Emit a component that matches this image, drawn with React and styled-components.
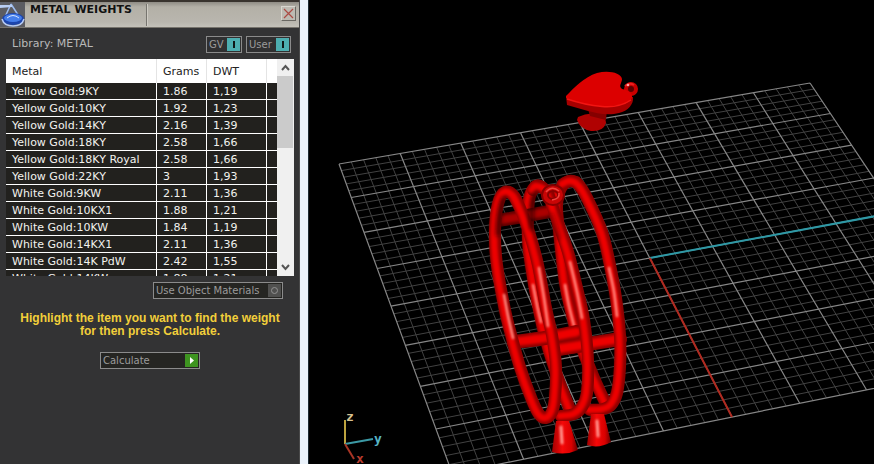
import React from "react";
import styled, { createGlobalStyle } from "styled-components";

const GlobalStyle = createGlobalStyle`
  * { box-sizing: border-box; }
  html, body { margin: 0; background: #000; }
  body { font-family: "DejaVu Sans", Verdana, sans-serif; font-size: 11px; }
  button { font: inherit; margin: 0; padding: 0; }
`;

const Workspace = styled.main`
  display: grid;
  grid-template-columns: 309px minmax(0, 1fr);
  height: 100vh;
  overflow: hidden;
`;

const Panel = styled.section`
  display: flex;
  flex-direction: column;
  background: #333334;
  border-right: 8px solid #eaf2fb;
  box-shadow: inset -1px 0 0 #4a4a4a, 1px 0 0 #1c2a33;
  margin-right: 1px;
`;

const TitleBar = styled.header`
  display: flex;
  height: 28px;
  margin-right: 1px;
  border-top: 2px solid #38332e;
  border-bottom: 1px solid #77746d;
  background: linear-gradient(#8f8c85, #b3b0a7 5px, #b9b6ae 20px, #c4c2ba);
`;

const TitleIcon = styled.svg`
  width: 25px;
  height: 25px;
  background: #5b5c62;
`;

const Title = styled.h1`
  flex: 0 0 122px;
  margin: 2px 0 1px;
  padding-left: 5px;
  border-right: 1px solid #77756f;
  box-shadow: 1px 0 0 #cfccc4;
  font-size: 11px;
  line-height: 12px;
  color: #111;
  white-space: nowrap;
`;

const CloseButton = styled.button`
  display: grid;
  place-items: center;
  width: 15px;
  height: 15px;
  margin: 4px 3px 0 auto;
  background: #bdbab2;
  border: 1px solid;
  border-color: #d8d6cf #6a6862 #6a6862 #d8d6cf;
`;

const LibraryRow = styled.div`
  display: flex;
  align-items: flex-start;
  gap: 4px;
  height: 31px;
  padding: 8px 9px 0 12px;
`;

const LibraryName = styled.span`
  flex: 1;
  line-height: 16px;
  color: #b9b9b9;
`;

const PanelButton = styled.button`
  display: flex;
  align-items: center;
  justify-content: space-between;
  width: ${(p) => p.$width}px;
  height: 17px;
  padding: 0 1px 0 2px;
  border: 1px solid #8b8b8b;
  background: ${(p) => (p.$dark ? "#252522" : "#303031")};
  color: #9b9b9b;
  font-size: 10px;
  line-height: 15px;
  white-space: nowrap;
`;

const ButtonMark = styled.svg`
  flex: none;
  width: 13px;
  height: 13px;
  background: ${(p) => p.$color};
`;

const ListFrame = styled.div`
  display: flex;
  height: 217px;
  margin: 0 6px;
`;

const ListViewport = styled.div`
  flex: 1;
  overflow: hidden;
  background: #22211e;
`;

const MetalTable = styled.table`
  width: 100%;
  table-layout: fixed;
  border-collapse: separate;
  border-spacing: 0;
`;

const HeadCell = styled.th`
  width: ${(p) => p.$width};
  height: 24px;
  padding: 0 0 0 6px;
  background: #fff;
  border-right: 1px solid #e4e4e4;
  color: #222;
  font-weight: 400;
  text-align: left;
  &:last-child { border-right: 0; }
`;

const Cell = styled.td`
  height: 17px;
  padding: 1px 0 0 6px;
  border-right: 1px solid #fff;
  border-bottom: 1px solid #fff;
  color: #f2f2ee;
  line-height: 15px;
  white-space: nowrap;
  &:last-child { border-right: 0; }
`;

const ScrollRail = styled.div`
  display: flex;
  flex-direction: column;
  width: 17px;
  background: #f0f0f0;
`;

const ScrollButton = styled.button`
  display: grid;
  place-items: center;
  height: 17px;
  border: 0;
  background: #f0f0f0;
`;

const ScrollThumb = styled.div`
  height: 72px;
  margin: 0 1px 0 0;
  background: #cbcbcb;
`;

const ScrollSpace = styled.div`
  flex: 1;
`;

const MaterialsRow = styled.div`
  display: flex;
  justify-content: flex-end;
  padding: 6px 17px 0 0;
`;

const Hint = styled.p`
  margin: 13px 0 14px;
  font-family: "Liberation Sans", Arial, sans-serif;
  font-size: 12px;
  font-weight: 700;
  line-height: 13px;
  text-align: center;
  color: #f2cf3a;
`;

const ActionRow = styled.div`
  display: flex;
  justify-content: center;
`;

const Scene = styled.svg`
  display: block;
  width: 100%;
  height: 100%;
  min-height: 0;
  background: #000;
`;

const AxisLabel = styled.text`
  font-family: "DejaVu Sans Mono", monospace;
  font-size: 13px;
  font-weight: 700;
  fill: ${(p) => p.$color};
`;

const metals = [
  ["Yellow Gold:9KY", "1.86", "1,19"],
  ["Yellow Gold:10KY", "1.92", "1,23"],
  ["Yellow Gold:14KY", "2.16", "1,39"],
  ["Yellow Gold:18KY", "2.58", "1,66"],
  ["Yellow Gold:18KY Royal", "2.58", "1,66"],
  ["Yellow Gold:22KY", "3", "1,93"],
  ["White Gold:9KW", "2.11", "1,36"],
  ["White Gold:10KX1", "1.88", "1,21"],
  ["White Gold:10KW", "1.84", "1,19"],
  ["White Gold:14KX1", "2.11", "1,36"],
  ["White Gold:14K PdW", "2.42", "1,55"],
  ["White Gold:14KW", "1.88", "1,21"],
];

// Perspective projection of the construction plane (0..8 on each axis).
function project(u, v) {
  const d = 1 + 0.005644 * u - 0.01895 * v;
  return [
    (339 + 63.45 * u + 5.595 * v) / d,
    (164 - 9.657 * u + 29.73 * v) / d,
  ];
}

function segment(u1, v1, u2, v2) {
  const [x1, y1] = project(u1, v1);
  const [x2, y2] = project(u2, v2);
  return `M${x1.toFixed(1)} ${y1.toFixed(1)}L${x2.toFixed(1)} ${y2.toFixed(1)}`;
}

function gridPath(major) {
  let d = "";
  for (let i = 0; i <= 40; i += 1) {
    if ((i % 5 === 0) === major) {
      d += segment(i / 5, 0, i / 5, 8) + segment(0, i / 5, 8, i / 5);
    }
  }
  return d;
}

// Smooth curve through a list of points.
function curve(pts) {
  let d = `M${pts[0].join(" ")}`;
  for (let i = 0; i < pts.length - 1; i += 1) {
    const p0 = pts[Math.max(i - 1, 0)];
    const p1 = pts[i];
    const p2 = pts[i + 1];
    const p3 = pts[Math.min(i + 2, pts.length - 1)];
    const c = [
      p1[0] + (p2[0] - p0[0]) / 6, p1[1] + (p2[1] - p0[1]) / 6,
      p2[0] - (p3[0] - p1[0]) / 6, p2[1] - (p3[1] - p1[1]) / 6,
      p2[0], p2[1],
    ];
    d += `C${c.map((n) => n.toFixed(1)).join(" ")}`;
  }
  return d;
}

function Tube({ points, width = 12, dark = false }) {
  const d = curve(points);
  return (
    <g fill="none" strokeLinecap="round" strokeLinejoin="round">
      <path d={d} stroke={dark ? "#600000" : "#8c0000"} strokeWidth={width} />
      <g filter="url(#soft)" transform="translate(-1 0)">
        <path d={d} stroke={dark ? "#900000" : "#c20000"} strokeWidth={width - 4} />
        <path d={d} stroke={dark ? "#ac0000" : "#ee0000"} strokeWidth={width - 7} />
      </g>
    </g>
  );
}

const frontRing = [
  [520, 208], [514, 196], [505, 192], [498, 204], [495, 232], [497, 265], [505, 310], [512, 338], [520, 367],
  [532, 400], [539, 414], [546, 418], [552, 412], [555, 398], [556, 367], [552, 335], [546, 308], [538, 265],
  [529, 232], [520, 208], [514, 196],
];
const midBack = [[542, 187], [536, 186], [529, 200], [528, 238], [531, 265], [537, 300], [546, 340], [558, 378], [571, 412]];
const midNear = [[533, 190], [537, 186], [547, 192], [556, 217], [568, 252], [577, 288], [584, 320], [588, 360], [587, 393], [582, 407], [574, 414], [561, 416]];
const rearBack = [[576, 182], [569, 181], [561, 188], [557, 205], [559, 230], [565, 282], [571, 310], [579, 340], [594, 378], [606, 404]];
const rearNear = [[563, 184], [570, 181], [578, 184], [587, 198], [602, 232], [610, 265], [616, 298], [620, 335], [620, 367], [617, 393], [611, 405], [603, 409], [590, 410]];

function Charm() {
  return (
    <g>
      <path d="M578 117Q592 110 605 117L606 123Q603 132 591 131Q580 129 577 120Z" fill="#b00202" />
      <path d="M588 109H607L606 120L590 116Z" fill="#850000" />
      <path d="M566 96L633 97C634 104 628 111 619 113C608 116 596 113 588 111L567 105Z" fill="#a60000" />
      <ellipse cx="631" cy="89" rx="5" ry="5" fill="#5c0000" stroke="#c80000" strokeWidth="4" />
      <path d="M566 96C574 88 584 77 597 73C609 70 621 73 622 79C622 83 618 86 622 89C628 90 633 93 632 98C629 104 618 106 607 106C594 107 580 103 566 98Z" fill="#dc0000" />
      <path d="M567 99Q585 105 602 106.500T631 100" fill="none" stroke="#f21512" strokeWidth="1.500" />
      <path d="M625 86Q629 82 634 85" fill="none" stroke="#ed2020" strokeWidth="2" />
      <circle cx="628" cy="85" r="1.300" fill="#ffa8a8" />
    </g>
  );
}

function Cone({ d, highlight }) {
  return (
    <g>
      <path d={d} fill="url(#coneShade)" />
      <path d={highlight} stroke="#ff9a92" strokeWidth="3" strokeLinecap="round" filter="url(#soft)" />
    </g>
  );
}

function Highlight({ points }) {
  return (
    <path
      d={curve(points)}
      fill="none"
      stroke="#ff8f84"
      strokeWidth="2.500"
      strokeLinecap="round"
      filter="url(#soft)"
    />
  );
}

function Viewport() {
  return (
    <Scene viewBox="309 0 565 464" preserveAspectRatio="xMinYMin slice" role="img" aria-label="Perspective view of the ring model">
      <defs>
        <linearGradient id="coneShade">
          <stop offset="0" stopColor="#a00000" />
          <stop offset="0.4" stopColor="#f50808" />
          <stop offset="0.75" stopColor="#d80000" />
          <stop offset="1" stopColor="#680000" />
        </linearGradient>
        <filter id="soft" filterUnits="userSpaceOnUse" x="480" y="160" width="160" height="300" colorInterpolationFilters="sRGB">
          <feGaussianBlur stdDeviation="0.8" />
        </filter>
        <filter id="shade" filterUnits="userSpaceOnUse" x="480" y="160" width="160" height="300">
          <feGaussianBlur stdDeviation="2" />
        </filter>
      </defs>

      <path d={gridPath(false)} stroke="#424242" strokeWidth="1" fill="none" />
      <path d={gridPath(true)} stroke="#868686" strokeWidth="1.200" fill="none" />
      <path d={segment(4, 4, 8, 4)} stroke="#2e98a5" strokeWidth="2" />
      <path d={segment(4, 4, 4, 8)} stroke="#b02a20" strokeWidth="2" />

      <Charm />

      <Tube points={rearBack} />
      <Highlight points={[[565, 285], [569, 306], [574, 326]]} />
      <Tube points={[[556, 349], [588, 344], [620, 339]]} width={14} />
      <Tube points={midBack} />
      <Highlight points={[[533, 285], [537, 305], [541, 322]]} />
      <Tube points={[[501, 220], [525, 216], [552, 211]]} width={13} dark />
      <Tube points={[[514, 342], [545, 338], [577, 332]]} width={14} />
      <Tube points={rearNear} />
      <Highlight points={[[609, 268], [614, 292], [617, 316]]} />
      <Cone d="M591 414H604L611 442Q599 449 587 445Z" highlight="M597 421L598 436" />
      <Tube points={[[558, 349], [583, 345]]} width={14} />
      <Tube points={midNear} />
      <Highlight points={[[570, 262], [577, 292], [582, 318]]} />
      <Cone d="M556 421H569L578 450Q565 456 552 452Z" highlight="M561 427L562 443" />
      <Tube points={frontRing} />
      <Highlight points={[[504, 295], [508, 316], [513, 338]]} />
      <Highlight points={[[539, 268], [544, 298], [548, 326]]} />
      <g fill="none" stroke="#180000" strokeOpacity="0.6" strokeWidth="5" filter="url(#shade)">
        <path d="M504 197Q498 210 498 236" />
        <path d="M536 192Q530 203 532 230" />
        <path d="M551 213Q556 225 559 240" strokeOpacity="0.3" />
      </g>

      <ellipse cx="553" cy="195" rx="8" ry="7" fill="none" stroke="#870000" strokeWidth="8" />
      <ellipse cx="553" cy="195" rx="8" ry="7" fill="none" stroke="#c90505" strokeWidth="4" />
      <path d="M546 192Q552 185 559 191M552 200Q560 199 559 193" fill="none" stroke="#f04540" strokeWidth="1.500" />

      <g fill="none" strokeWidth="2">
        <path d="M345 444V420" stroke="#bda33f" />
        <path d="M345 444L373 439" stroke="#3c9aa6" />
        <path d="M345 444L354 459" stroke="#a83424" />
      </g>
      <AxisLabel x="346" y="421" $color="#d6c190">z</AxisLabel>
      <AxisLabel x="374" y="443" $color="#57b4c6">y</AxisLabel>
      <AxisLabel x="356" y="463" $color="#b93c2e">x</AxisLabel>
    </Scene>
  );
}

function ToggleMark() {
  return (
    <ButtonMark viewBox="0 0 13 13" $color="#4daeb0" aria-hidden="true">
      <path d="M6 3H8V10H6Z" fill="#101616" />
    </ButtonMark>
  );
}

function Chevron({ d }) {
  return (
    <svg width="9" height="7" viewBox="0 0 9 7" aria-hidden="true">
      <path d={d} fill="none" stroke="#555" strokeWidth="2" />
    </svg>
  );
}

export default function App() {
  return (
    <>
      <GlobalStyle />
      <Workspace>
        <Panel>
          <TitleBar>
            <TitleIcon viewBox="0 0 25 25" aria-hidden="true">
              <path d="M11 2L22 19M11 2L4 17" fill="none" stroke="#9ebcf0" strokeWidth="1.500" />
              <path d="M0 3H12V5L0 6Z" fill="#b8cdf2" />
              <ellipse cx="13" cy="17" rx="11" ry="6" fill="#1c45ad" />
              <ellipse cx="13" cy="16" rx="9" ry="4" fill="#447eeb" />
              <path d="M2 17Q4 24 13 24T24 17" fill="none" stroke="#b5cbf7" strokeWidth="1.500" />
              <path d="M7 16Q13 11 19 16" fill="none" stroke="#d5e4ff" />
            </TitleIcon>
            <Title>METAL WEIGHTS</Title>
            <CloseButton aria-label="Close">
              <svg width="11" height="11" viewBox="0 0 11 11" aria-hidden="true">
                <path d="M1 1L10 10M10 1L1 10" stroke="#ab4a43" strokeWidth="1.200" />
              </svg>
            </CloseButton>
          </TitleBar>

          <LibraryRow>
            <LibraryName>Library: METAL</LibraryName>
            <PanelButton $width={36} aria-pressed="true">GV<ToggleMark /></PanelButton>
            <PanelButton $width={45} aria-pressed="true">User<ToggleMark /></PanelButton>
          </LibraryRow>

          <ListFrame>
            <ListViewport>
              <MetalTable>
                <thead>
                  <tr>
                    <HeadCell $width="auto">Metal</HeadCell>
                    <HeadCell $width="50px">Grams</HeadCell>
                    <HeadCell $width="60px">DWT</HeadCell>
                    <HeadCell $width="10px" aria-hidden="true" />
                  </tr>
                </thead>
                <tbody>
                  {metals.map(([name, grams, dwt]) => (
                    <tr key={name}>
                      <Cell>{name}</Cell>
                      <Cell>{grams}</Cell>
                      <Cell>{dwt}</Cell>
                      <Cell />
                    </tr>
                  ))}
                </tbody>
              </MetalTable>
            </ListViewport>
            <ScrollRail>
              <ScrollButton aria-label="Scroll up"><Chevron d="M1 6L4.500 2L8 6" /></ScrollButton>
              <ScrollThumb />
              <ScrollSpace />
              <ScrollButton aria-label="Scroll down"><Chevron d="M1 1L4.500 5L8 1" /></ScrollButton>
            </ScrollRail>
          </ListFrame>

          <MaterialsRow>
            <PanelButton $width={130} $dark>
              Use Object Materials
              <ButtonMark viewBox="0 0 13 13" $color="#50504f" aria-hidden="true">
                <circle cx="6.500" cy="6.500" r="3" fill="none" stroke="#929292" />
              </ButtonMark>
            </PanelButton>
          </MaterialsRow>

          <Hint>
            Highlight the item you want to find the weight
            <br />
            for then press Calculate.
          </Hint>

          <ActionRow>
            <PanelButton $width={100} $dark>
              Calculate
              <ButtonMark viewBox="0 0 13 13" $color="#3e9420" aria-hidden="true">
                <path d="M5 3L9 6.500L5 10Z" fill="#fff" />
              </ButtonMark>
            </PanelButton>
          </ActionRow>
        </Panel>
        <Viewport />
      </Workspace>
    </>
  );
}
